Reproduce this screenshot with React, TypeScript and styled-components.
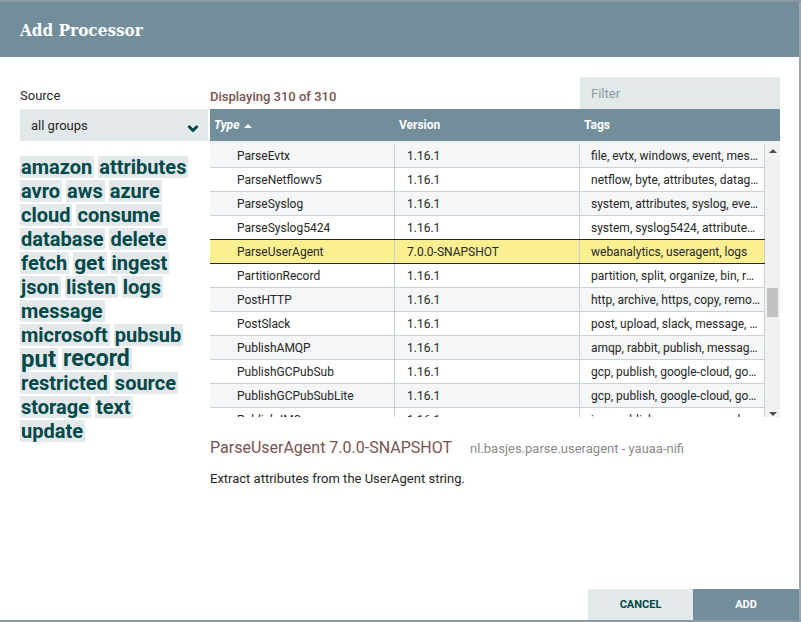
import React from "react";
import styled, { createGlobalStyle } from "styled-components";

const Global = createGlobalStyle`
  html, body { margin: 0; padding: 0; }
  body {
    background: #8b9ba3;
    font-family: Roboto, "Noto Sans", Arial, sans-serif;
    width: 801px;
    height: 622px;
    overflow: hidden;
  }
`;

const Dialog = styled.div`
  margin-top: 2px;
  width: 801px;
  height: 618px;
  background: #ffffff;
  border-right: 2px solid #9aa7ad;
  display: flex;
  flex-direction: column;
  box-sizing: border-box;
`;

const Header = styled.div`
  height: 55px;
  background: #728e9b;
  display: flex;
  align-items: center;
  padding-left: 20px;
  flex: none;
`;

const Title = styled.h1`
  margin: 0;
  color: #ffffff;
  font-family: "DejaVu Serif", "Liberation Serif", serif;
  font-stretch: condensed;
  font-weight: bold;
  font-size: 17px;
`;

const Body = styled.div`
  flex: 1;
  padding: 20px 19px 0 20px;
  display: flex;
  align-items: flex-start;
  gap: 2px;
`;

const LeftCol = styled.div`
  width: 188px;
  display: flex;
  flex-direction: column;
  padding-top: 12px;
`;

const Label = styled.div`
  font-size: 13px;
  color: #262626;
  height: 20px;
  line-height: 14px;
`;

const Select = styled.div`
  height: 32px;
  background: #e3e8eb;
  display: flex;
  align-items: center;
  justify-content: space-between;
  padding: 0 9px 0 11px;
  font-size: 13px;
  color: #262626;
  & > svg {
    margin-top: 7px;
  }
`;

const Cloud = styled.ul`
  list-style: none;
  margin: 15px 0 0 0;
  padding: 0;
  width: 176px;
  display: flex;
  flex-wrap: wrap;
  column-gap: 4px;
  row-gap: 2px;
`;

const Tag = styled.li<{ $size: number }>`
  background: #e3e8eb;
  color: #004849;
  font-weight: bold;
  font-size: ${(p) => p.$size}px;
  height: 22px;
  line-height: 22px;
  padding: 0 2px 0 1px;
  white-space: nowrap;
`;

const RightCol = styled.div`
  flex: 1;
  display: flex;
  flex-direction: column;
`;

const TopBar = styled.div`
  height: 32px;
  display: flex;
  justify-content: space-between;
  align-items: flex-end;
`;

const Count = styled.div`
  font-size: 13px;
  font-weight: 500;
  color: #775351;
  padding-bottom: 5px;
`;

const Filter = styled.div`
  width: 200px;
  height: 32px;
  background: #e3e8eb;
  color: #8a9ca5;
  font-size: 13px;
  display: flex;
  align-items: center;
  padding-left: 11px;
  box-sizing: border-box;
`;

const Grid = styled.div`
  display: flex;
  flex-direction: column;
`;

const HeadRow = styled.div`
  height: 32px;
  background: #728e9b;
  display: grid;
  grid-template-columns: 185px 185px 1fr;
  border-bottom: 3px solid #eef1f3;
`;

const HeadCell = styled.div<{ $italic?: boolean }>`
  color: #ffffff;
  font-weight: bold;
  font-size: 12px;
  font-style: ${(p) => (p.$italic ? "italic" : "normal")};
  display: flex;
  align-items: center;
  gap: 5px;
  padding-left: 4px;
`;

const Viewport = styled.div`
  height: 273px;
  display: flex;
  overflow: hidden;
`;

const Rows = styled.div`
  flex: 1;
  display: flex;
  flex-direction: column;
`;

const Row = styled.div<{ $odd: boolean; $selected: boolean }>`
  flex: none;
  height: 24px;
  box-sizing: border-box;
  display: grid;
  grid-template-columns: 185px 185px 1fr;
  background: ${(p) => (p.$selected ? "#fcef92" : p.$odd ? "#ffffff" : "#f4f6f7")};
  border-bottom: 1px solid ${(p) => (p.$selected ? "#262626" : "#c7d2d7")};
  box-shadow: ${(p) => (p.$selected ? "0 -1px 0 #262626" : "none")};
`;

const Cell = styled.div<{ $pad: number }>`
  font-size: 12px;
  color: #262626;
  padding-left: ${(p) => p.$pad}px;
  padding-right: 4px;
  display: flex;
  align-items: center;
  white-space: nowrap;
  overflow: hidden;
  border-right: 1px solid #c7d2d7;
  & > span {
    overflow: hidden;
    text-overflow: ellipsis;
  }
`;

const Scrollbar = styled.div`
  width: 15px;
  background: #f1f1f1;
  position: relative;
  flex: none;
`;

const Thumb = styled.div`
  position: absolute;
  left: 2px;
  right: 2px;
  top: 144px;
  height: 29px;
  background: #c1c1c1;
`;

const Arrow = styled.div<{ $down?: boolean }>`
  position: absolute;
  left: 4px;
  ${(p) => (p.$down ? "bottom: 1px;" : "top: 5px;")}
  width: 0;
  height: 0;
  border-left: 4px solid transparent;
  border-right: 4px solid transparent;
  ${(p) =>
    p.$down ? "border-top: 4px solid #505050;" : "border-bottom: 4px solid #505050;"}
`;

const Details = styled.div`
  padding-top: 21px;
`;

const DetailTitle = styled.div`
  display: flex;
  align-items: baseline;
  gap: 18px;
`;

const Name = styled.span`
  font-size: 16px;
  color: #775351;
`;

const Bundle = styled.span`
  font-size: 13px;
  color: #8a8a8a;
`;

const Desc = styled.p`
  margin: 14px 0 0 0;
  font-size: 13px;
  color: #262626;
`;

const Footer = styled.div`
  display: flex;
  justify-content: flex-end;
  flex: none;
`;

const Button = styled.div<{ $primary?: boolean }>`
  width: ${(p) => (p.$primary ? "106px" : "105px")};
  height: 31px;
  display: flex;
  align-items: center;
  justify-content: center;
  font-size: 11px;
  font-weight: bold;
  background: ${(p) => (p.$primary ? "#728e9b" : "#e3e8eb")};
  color: ${(p) => (p.$primary ? "#ffffff" : "#004849")};
`;

const tags: [string, number][] = [
  ["amazon", 20],
  ["attributes", 20],
  ["avro", 20],
  ["aws", 20],
  ["azure", 20],
  ["cloud", 20],
  ["consume", 20],
  ["database", 20],
  ["delete", 20],
  ["fetch", 20],
  ["get", 21],
  ["ingest", 20],
  ["json", 20],
  ["listen", 20],
  ["logs", 20],
  ["message", 20],
  ["microsoft", 20],
  ["pubsub", 20],
  ["put", 24],
  ["record", 23],
  ["restricted", 20],
  ["source", 20],
  ["storage", 20],
  ["text", 20],
  ["update", 20],
];

const rows: [string, string, string][] = [
  ["ParseEvtx", "1.16.1", "file, evtx, windows, event, message"],
  ["ParseNetflowv5", "1.16.1", "netflow, byte, attributes, datagram"],
  ["ParseSyslog", "1.16.1", "system, attributes, syslog, event"],
  ["ParseSyslog5424", "1.16.1", "system, syslog5424, attributes, event"],
  ["ParseUserAgent", "7.0.0-SNAPSHOT", "webanalytics, useragent, logs"],
  ["PartitionRecord", "1.16.1", "partition, split, organize, bin, record"],
  ["PostHTTP", "1.16.1", "http, archive, https, copy, remote"],
  ["PostSlack", "1.16.1", "post, upload, slack, message, notify"],
  ["PublishAMQP", "1.16.1", "amqp, rabbit, publish, message, send"],
  ["PublishGCPubSub", "1.16.1", "gcp, publish, google-cloud, google"],
  ["PublishGCPubSubLite", "1.16.1", "gcp, publish, google-cloud, google"],
  ["PublishJMS", "1.16.1", "jms, publish, message, send, put"],
];

export default function App() {
  return (
    <>
      <Global />
      <Dialog>
        <Header>
          <Title>Add Processor</Title>
        </Header>
        <Body>
          <LeftCol>
            <Label>Source</Label>
            <Select>
              <span>all groups</span>
              <svg width="12" height="9" viewBox="0 0 12 9">
                <polyline
                  points="1.5,2 6,6.5 10.5,2"
                  fill="none"
                  stroke="#004849"
                  strokeWidth="2.8"
                />
              </svg>
            </Select>
            <Cloud>
              {tags.map(([t, s]) => (
                <Tag key={t} $size={s}>
                  {t}
                </Tag>
              ))}
            </Cloud>
          </LeftCol>
          <RightCol>
            <TopBar>
              <Count>Displaying 310 of 310</Count>
              <Filter>Filter</Filter>
            </TopBar>
            <Grid>
              <HeadRow>
                <HeadCell $italic>
                  Type
                  <svg width="8" height="5" viewBox="0 0 8 5">
                    <polygon points="0,5 4,1 8,5" fill="#ffffff" />
                  </svg>
                </HeadCell>
                <HeadCell>Version</HeadCell>
                <HeadCell>Tags</HeadCell>
              </HeadRow>
              <Viewport>
                <Rows>
                  {rows.map(([n, v, t], i) => (
                    <Row key={n} $odd={i % 2 === 1} $selected={i === 4}>
                      <Cell $pad={27}>
                        <span>{n}</span>
                      </Cell>
                      <Cell $pad={12}>
                        <span>{v}</span>
                      </Cell>
                      <Cell $pad={11}>
                        <span>{t}</span>
                      </Cell>
                    </Row>
                  ))}
                </Rows>
                <Scrollbar>
                  <Arrow />
                  <Thumb />
                  <Arrow $down />
                </Scrollbar>
              </Viewport>
            </Grid>
            <Details>
              <DetailTitle>
                <Name>ParseUserAgent 7.0.0-SNAPSHOT</Name>
                <Bundle>nl.basjes.parse.useragent - yauaa-nifi</Bundle>
              </DetailTitle>
              <Desc>Extract attributes from the UserAgent string.</Desc>
            </Details>
          </RightCol>
        </Body>
        <Footer>
          <Button>CANCEL</Button>
          <Button $primary>ADD</Button>
        </Footer>
      </Dialog>
    </>
  );
}
